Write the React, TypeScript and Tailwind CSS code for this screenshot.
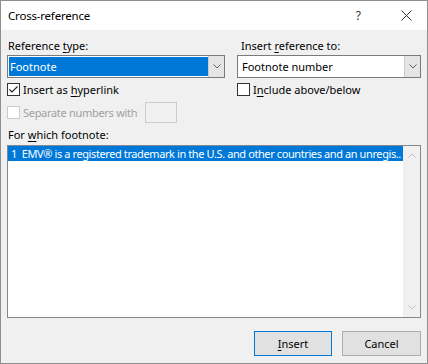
import React from "react";

function Chevron({ up = false, color = "#606060" }: { up?: boolean; color?: string }) {
  return (
    <svg width="8" height="5" viewBox="0 0 8 5" className="block">
      <path
        d={up ? "M0.5 4.5 L4 1 L7.5 4.5" : "M0.5 0.5 L4 4 L7.5 0.5"}
        fill="none"
        stroke={color}
        strokeWidth="1"
      />
    </svg>
  );
}

function Check({ checked = false, disabled = false }: { checked?: boolean; disabled?: boolean }) {
  return (
    <div
      className={
        "w-[13px] h-[13px] shrink-0 border flex items-center justify-center " +
        (disabled ? "border-[#cccccc] bg-white" : "border-[#333333] bg-white")
      }
    >
      {checked && (
        <svg width="11" height="11" viewBox="0 0 11 11">
          <path d="M1.5 5.5 L4 8 L9.5 2.5" fill="none" stroke="#222" strokeWidth="1.1" />
        </svg>
      )}
    </div>
  );
}

function Combo({ value, selected }: { value: string; selected?: boolean }) {
  return (
    <div className="h-[23px] border border-[#7a7a7a] bg-white flex items-stretch p-[1px]">
      <div
        className={
          "flex-1 flex items-center " +
          (selected ? "bg-[#0078d7] text-white pl-[1px]" : "text-black pl-[3px]")
        }
      >
        {value}
      </div>
      <div className="w-[16px] -my-[1px] -mr-[1px] bg-[#e5e5e5] border-l border-[#cccccc] flex items-center justify-center">
        <Chevron />
      </div>
    </div>
  );
}

export default function App() {
  return (
    <div
      className="w-[428px] h-[364px] border border-[#8f8f8f] bg-[#f0f0f0] flex flex-col text-[11px] text-black leading-[16px]"
      style={{ fontFamily: '"Segoe UI","Noto Sans",sans-serif' }}
    >
      <div className="h-[29px] shrink-0 bg-white flex items-center pl-[7px] pr-[15px]">
        <span className="flex-1 text-[11.5px] tracking-[-0.2px]">Cross-reference</span>
        <span className="mr-[40px] text-[12px] text-[#333]">?</span>
        <svg width="11" height="11" viewBox="0 0 11 11">
          <path d="M0.5 0.5 L10.5 10.5 M10.5 0.5 L0.5 10.5" stroke="#333" strokeWidth="1" />
        </svg>
      </div>

      <div className="flex-1 flex flex-col pl-[6px] pr-[6px] pt-[8px]">
        <div className="flex gap-[12px]">
          <div className="w-[218px] flex flex-col">
            <div className="h-[17px] pl-[1px]">
              Reference <span className="underline underline-offset-2">t</span>ype:
            </div>
            <Combo value="Footnote" selected />
            <div className="mt-[5px] flex items-center gap-[3px] h-[13px]">
              <Check checked />
              <span>
                Insert as <span className="underline underline-offset-2">h</span>yperlink
              </span>
            </div>
            <div className="mt-[6px] h-[21px] flex items-center">
              <Check disabled />
              <span className="ml-[3px] w-[122px] shrink-0 whitespace-nowrap text-[#a0a0a0] tracking-[-0.3px]">
                Separate numbers with
              </span>
              <div className="w-[32px] h-[21px] border border-[#cccccc] bg-[#f0f0f0]" />
            </div>
          </div>
          <div className="flex-1 flex flex-col">
            <div className="h-[17px] pl-[4px]">
              Insert <span className="underline underline-offset-2">r</span>eference to:
            </div>
            <Combo value="Footnote number" />
            <div className="mt-[5px] flex items-center gap-[3px] h-[13px]">
              <Check />
              <span>
                I<span className="underline underline-offset-2">n</span>clude above/below
              </span>
            </div>
          </div>
        </div>

        <div className="mt-[4px] h-[16px] pl-[1px]">
          For <span className="underline underline-offset-2">w</span>hich footnote:
        </div>
        <div className="mt-[2px] h-[173px] border border-[#828790] bg-white flex">
          <div className="flex-1 min-w-0">
            <div className="h-[15px] bg-[#0078d7] text-white whitespace-nowrap overflow-hidden leading-[15px] pl-[3px] tracking-[-0.4px]">
              1&nbsp;&nbsp;EMV® is a registered trademark in the U.S. and other countries and an unregis..
            </div>
          </div>
          <div className="w-[17px] bg-[#f0f0f0] flex flex-col items-center justify-between py-[7px]">
            <Chevron up color="#c0c0c0" />
            <Chevron color="#c0c0c0" />
          </div>
        </div>

        <div className="mt-[13px] flex justify-end gap-[10px]">
          <button className="w-[78px] h-[25px] border border-[#0078d7] bg-[#e1e1e1]">
            <span className="underline underline-offset-2">I</span>nsert
          </button>
          <button className="w-[79px] h-[25px] border border-[#adadad] bg-[#e1e1e1]">
            Cancel
          </button>
        </div>
      </div>
    </div>
  );
}
